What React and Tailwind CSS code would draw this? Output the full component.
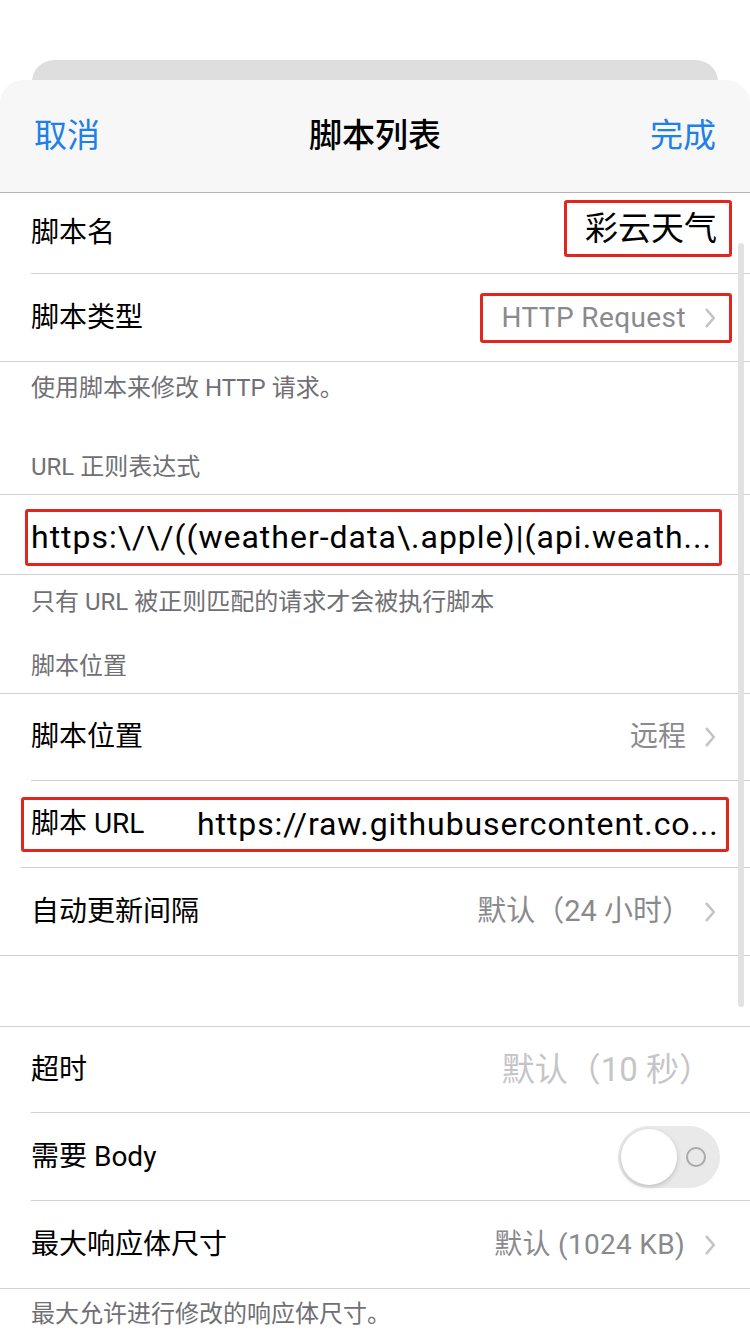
import React from "react";

const FONT = { fontFamily: 'Roboto, "Noto Sans CJK SC", "Noto Sans", sans-serif' };

function Chevron() {
  return (
    <svg width="11" height="20" viewBox="0 0 11 20" className="shrink-0">
      <path d="M1.8 1.8 L8.8 10 L1.8 18.2" stroke="#c4c4c7" strokeWidth="2.6" fill="none" strokeLinecap="round" strokeLinejoin="round" />
    </svg>
  );
}

function Row({ h, last, children, className = "" }) {
  return (
    <div className="pl-[31px]">
      <div className={`${h} ${last ? "" : "border-b border-[#d1d1d6]"} flex items-center ${className}`}>{children}</div>
    </div>
  );
}

export default function App() {
  return (
    <div className="w-[750px] h-[1334px] bg-white relative overflow-hidden" style={FONT}>
      <div className="h-[60px]" />
      <div className="mx-[32px] h-[44px] bg-[#dedede] rounded-t-[22px]" />
      <div className="-mt-[24px] relative bg-white rounded-t-[24px] overflow-hidden">
        {/* nav header */}
        <div className="h-[113px] bg-[#f7f7f7] border-b border-[#b3b3b3] flex items-center px-[34px]">
          <div className="flex-1 text-[33px] text-[#1f80e8]">取消</div>
          <div className="text-[33px] font-medium text-black">脚本列表</div>
          <div className="flex-1 text-right text-[33px] text-[#1f80e8]">完成</div>
        </div>

        {/* group 1 */}
        <div className="border-b border-[#d1d1d6]">
          <Row h="h-[81px]" className="justify-between pr-[18px] items-start">
            <span className="text-[28px] text-black self-center">脚本名</span>
            <span className="mt-[7px] h-[57px] flex items-center border-[3px] border-[#e0261e] rounded-[3px] pl-[18px] pr-[12px] text-[33px] text-black">彩云天气</span>
          </Row>
          <Row h="h-[87px]" last className="justify-between pr-[18px]">
            <span className="text-[28px] text-black">脚本类型</span>
            <span className="h-[50px] flex items-center gap-[19px] border-[3px] border-[#e0261e] rounded-[3px] pl-[18px] pr-[13px] text-[28px] text-[#8a8a8e] tracking-[0.4px]">
              HTTP Request
              <Chevron />
            </span>
          </Row>
        </div>

        <div className="pl-[31px] pt-[10px] pb-[11px] text-[24px] leading-[32px] text-[#707074]">
          <div>使用脚本来修改 HTTP 请求。</div>
          <div className="mt-[47px]">URL 正则表达式</div>
        </div>

        {/* group 2 */}
        <div className="border-t border-b border-[#d1d1d6]">
          <div className="h-[79px] pl-[25px] flex items-center">
            <div className="mt-[5px] w-[697px] h-[57px] flex items-center border-[3px] border-[#e0261e] rounded-[3px] pl-[3px] pr-[2px] text-[32px] text-black whitespace-nowrap overflow-hidden tracking-[1px]">
              {"https:\\/\\/((weather-data\\.apple)|(api.weath..."}
            </div>
          </div>
        </div>

        <div className="pl-[31px] pt-[11px] pb-[11px] text-[24px] leading-[32px] text-[#707074]">
          <div>只有 URL 被正则匹配的请求才会被执行脚本</div>
          <div className="mt-[32px]">脚本位置</div>
        </div>

        {/* group 3 */}
        <div className="border-t border-b border-[#d1d1d6]">
          <Row h="h-[87px]" className="justify-between pr-[34px]">
            <span className="text-[28px] text-black">脚本位置</span>
            <span className="flex items-center gap-[19px] text-[28px] text-[#8a8a8e]">
              远程
              <Chevron />
            </span>
          </Row>
          <div className="pl-[21px]">
            <div className="h-[87px] border-b border-[#d1d1d6] flex items-center">
              <div className="w-[708px] h-[55px] flex items-center border-[3px] border-[#e0261e] rounded-[3px] pl-[7px] pr-[2px] whitespace-nowrap overflow-hidden">
                <span className="w-[166px] shrink-0 text-[28px] text-black">脚本 URL</span>
                <span className="text-[32px] text-black tracking-[0.9px]">https://raw.githubusercontent.co...</span>
              </div>
            </div>
          </div>
          <Row h="h-[87px]" last className="justify-between pr-[34px]">
            <span className="text-[28px] text-black">自动更新间隔</span>
            <span className="flex items-center gap-[14px] text-[29px] text-[#8a8a8e]">
              默认（24 小时）
              <Chevron />
            </span>
          </Row>
        </div>

        <div className="h-[70px]" />

        {/* group 4 */}
        <div className="border-t border-b border-[#d1d1d6]">
          <Row h="h-[86px]" className="justify-between pr-[38px]">
            <span className="text-[28px] text-black">超时</span>
            <span className="text-[33px] text-[#c5c5c8]">默认（10 秒）</span>
          </Row>
          <Row h="h-[88px]" className="justify-between pr-[30px]">
            <span className="text-[28px] text-black">需要 Body</span>
            <div className="w-[102px] h-[62px] rounded-full bg-[#e9e9ea] flex items-center pl-[3px]">
              <div className="w-[56px] h-[56px] rounded-full bg-white shadow-[0_2px_5px_rgba(0,0,0,0.18)]" />
              <div className="ml-[9px] w-[20px] h-[20px] rounded-full border-2 border-[#a9a9ab]" />
            </div>
          </Row>
          <Row h="h-[87px]" last className="justify-between pr-[34px]">
            <span className="text-[28px] text-black">最大响应体尺寸</span>
            <span className="flex items-center gap-[20px] text-[28px] text-[#8a8a8e] tracking-[0.3px]">
              默认 (1024 KB)
              <Chevron />
            </span>
          </Row>
        </div>

        <div className="pl-[31px] pt-[9px] text-[24px] leading-[32px] text-[#707074]">最大允许进行修改的响应体尺寸。</div>
      </div>

      {/* scrollbar */}
      <div className="absolute left-[738px] top-[243px] w-[6px] h-[764px] rounded-full bg-[#e2e2e2]" />
    </div>
  );
}
